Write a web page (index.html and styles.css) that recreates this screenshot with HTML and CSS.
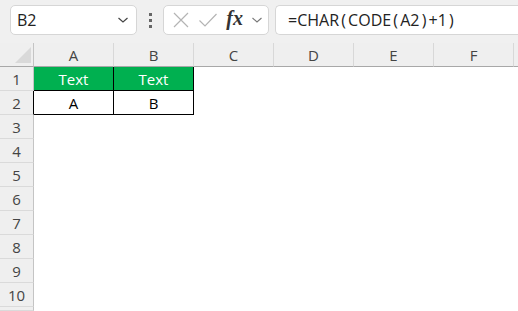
FILE: index.html
```html
<!DOCTYPE html>
<html lang="en">
<head>
    <meta charset="UTF-8">
    <title>Sheet</title>
    <link rel="stylesheet" href="styles.css">
</head>
<body>
    <div class="toolbar">
        <div class="namebox">
            <span class="cellref">B2</span>
            <svg class="chev" width="12" height="8" viewBox="0 0 12 8"><path d="M1.5 2 L6 6 L10.5 2" fill="none" stroke="#444" stroke-width="1.2"/></svg>
        </div>
        <div class="dots"><i></i><i></i><i></i></div>
        <div class="fxbox">
            <svg width="18" height="18" viewBox="0 0 18 18"><path d="M2 2 L16 16 M16 2 L2 16" stroke="#b4b4b4" stroke-width="1.2" fill="none"/></svg>
            <svg class="check" width="20" height="18" viewBox="0 0 20 18"><path d="M1.5 9.5 L7 15 L18.5 3" stroke="#b4b4b4" stroke-width="1.2" fill="none"/></svg>
            <span class="fx">fx</span>
            <svg width="12" height="8" viewBox="0 0 12 8"><path d="M1.5 2 L6 6 L10.5 2" fill="none" stroke="#777" stroke-width="1.1"/></svg>
        </div>
        <div class="formula">=CHAR<span class="paren">(</span>CODE<span class="paren">(</span>A2<span class="paren">)</span>+1<span class="paren">)</span></div>
    </div>

    <div class="sheet">
        <div class="corner"><span class="tri"></span></div>
        <div class="colhdr">A</div>
        <div class="colhdr">B</div>
        <div class="colhdr">C</div>
        <div class="colhdr">D</div>
        <div class="colhdr">E</div>
        <div class="colhdr">F</div>
        <div class="colhdr last"></div>

        <div class="rowhdr">1</div>
        <div class="cell head">Text</div>
        <div class="cell head">Text</div>
        <div class="cell"></div><div class="cell"></div><div class="cell"></div><div class="cell"></div><div class="cell"></div>

        <div class="rowhdr dark">2</div>
        <div class="cell boxed">A</div>
        <div class="cell boxed">B</div>
        <div class="cell"></div><div class="cell"></div><div class="cell"></div><div class="cell"></div><div class="cell"></div>

        <div class="rowhdr">3</div><div class="blank"></div>
        <div class="rowhdr">4</div><div class="blank"></div>
        <div class="rowhdr">5</div><div class="blank"></div>
        <div class="rowhdr">6</div><div class="blank"></div>
        <div class="rowhdr">7</div><div class="blank"></div>
        <div class="rowhdr">8</div><div class="blank"></div>
        <div class="rowhdr">9</div><div class="blank"></div>
        <div class="rowhdr">10</div><div class="blank"></div>
        <div class="rowhdr"></div><div class="blank"></div>
    </div>
</body>
</html>
```
FILE: styles.css
```css
body {
    margin: 0;
    width: 518px;
    height: 311px;
    overflow: hidden;
    background: #fff;
    font-family: "Open Sans", "Liberation Sans", sans-serif;
    color: #222;
}

.toolbar {
    display: flex;
    align-items: flex-start;
    height: 43px;
    padding: 5px 0 0 10px;
    box-sizing: border-box;
    background: #f0f0f0;
}

.toolbar > * {
    flex: none;
}

.namebox, .fxbox, .formula {
    height: 30px;
    box-sizing: border-box;
    background: #fff;
    border: 1px solid #d6d6d6;
    border-radius: 5px;
    display: flex;
    align-items: center;
}

.namebox {
    width: 127px;
    padding: 0 7px 0 6px;
    justify-content: space-between;
    font-size: 16px;
}

.dots {
    width: 26px;
    height: 30px;
    display: flex;
    flex-direction: column;
    align-items: center;
    justify-content: center;
    gap: 3px;
}

.dots i {
    display: block;
    width: 3px;
    height: 3px;
    background: #666;
}

.fxbox {
    width: 106px;
    padding: 0 5px 0 8px;
    justify-content: space-between;
}

.fx {
    font-family: "Liberation Serif", serif;
    font-style: italic;
    font-weight: bold;
    font-size: 20px;
    color: #333;
    margin-top: -3px;
}

.toolbar > .formula {
    flex: 1;
    margin-left: 6px;
    padding-left: 12px;
    border-right: none;
    border-radius: 5px 0 0 5px;
    font-size: 16px;
    color: #222;
}

.paren {
    margin: 0 2.2px;
}

.sheet {
    display: grid;
    grid-template-columns: 34px repeat(6, 80px) 1fr;
    grid-template-rows: repeat(11, 24px) 4px;
    font-size: 15px;
}

.corner, .colhdr, .rowhdr {
    background: #efefef;
    color: #444;
    box-sizing: border-box;
    display: flex;
    align-items: center;
    justify-content: center;
}

.corner {
    position: relative;
    border-right: 1px solid #c4c4c4;
    border-bottom: 1px solid #a8a8a8;
}

.tri {
    position: absolute;
    right: 2px;
    bottom: 3px;
    width: 0;
    height: 0;
    border-left: 16px solid transparent;
    border-bottom: 16px solid #d9d9d9;
}

.colhdr {
    border-right: 1px solid #d8d8d8;
    border-bottom: 1px solid #a8a8a8;
}

.colhdr.last {
    border-right: none;
}

.rowhdr {
    border-right: 1px solid #c4c4c4;
    border-bottom: 1px solid #dadada;
}

.rowhdr.dark {
    border-right-color: #000;
}

.cell {
    box-sizing: border-box;
    display: flex;
    align-items: center;
    justify-content: center;
    color: #000;
}

.cell.head {
    background: #00b050;
    color: #fff;
    border-right: 1px solid #000;
    border-bottom: 1px solid #000;
}

.cell.boxed {
    border-right: 1px solid #000;
    border-bottom: 1px solid #000;
}

.blank {
    grid-column: 2 / -1;
}
```
